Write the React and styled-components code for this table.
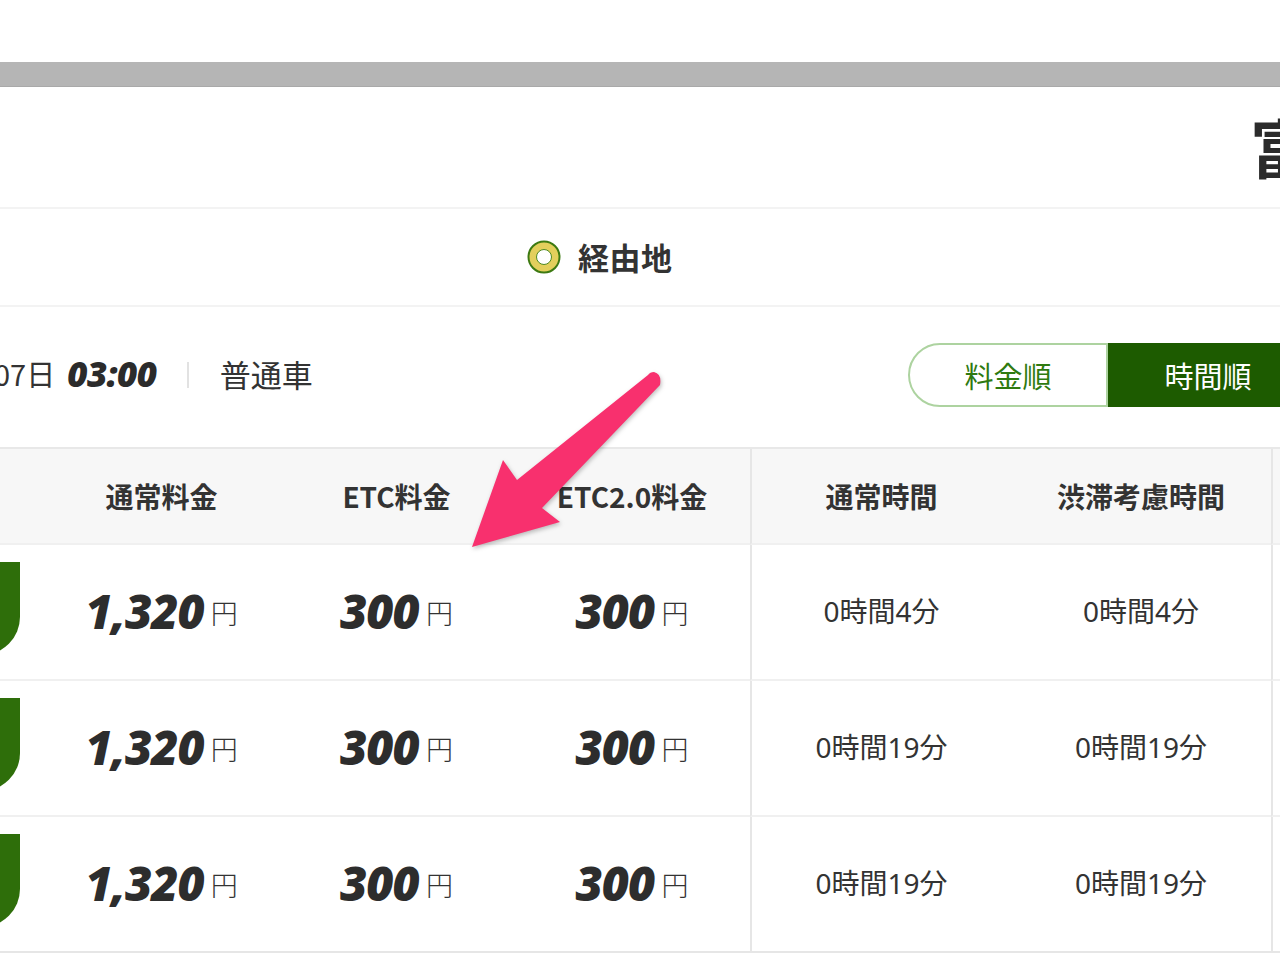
import React from 'react';
import styled, { createGlobalStyle } from 'styled-components';

const GlobalStyle = createGlobalStyle`
  html, body {
    margin: 0;
    padding: 0;
    background: #ffffff;
    overflow: hidden;
  }
  body {
    font-family: "Noto Sans", "Noto Sans CJK JP", sans-serif;
    color: #333333;
  }
`;

const Page = styled.div`
  position: relative;
  width: 1280px;
  height: 966px;
  overflow: hidden;
  background: #ffffff;
`;

const TopSpace = styled.div`
  height: 62px;
`;

const GreyBar = styled.div`
  height: 24px;
  background: #b5b5b5;
  border-bottom: 1px solid #a9a9a9;
`;

const TitleSection = styled.div`
  height: 120px;
  display: flex;
  align-items: center;
  justify-content: flex-end;
  overflow: hidden;
  border-bottom: 2px solid #f3f3f3;
`;

const TitleChar = styled.span`
  font-family: "Noto Sans CJK JP", sans-serif;
  font-weight: 700;
  font-size: 64px;
  line-height: 1;
  color: #2b2b2b;
  margin-right: -40px;
  margin-top: -4px;
  transform: translateX(-6px);
`;

const ViaSection = styled.div`
  height: 96px;
  display: flex;
  align-items: center;
  gap: 17px;
  padding-left: 527px;
  border-bottom: 2px solid #f3f3f3;
`;

const ViaLabel = styled.span`
  font-family: "Noto Sans CJK JP", sans-serif;
  font-weight: 700;
  font-size: 31px;
  color: #333333;
  letter-spacing: 0.5px;
  margin-top: -2px;
`;

const InfoRow = styled.div`
  height: 142px;
  box-sizing: border-box;
  padding-bottom: 4px;
  display: flex;
  align-items: center;
  justify-content: space-between;
  border-bottom: 2px solid #e8e8e8;
`;

const Conditions = styled.div`
  display: flex;
  align-items: center;
  margin-left: -6px;
  margin-top: -4px;
`;

const DateText = styled.span`
  font-family: "Noto Sans CJK JP", sans-serif;
  font-size: ${(p) => (p.$wide ? '31px' : '29px')};
  color: #333333;
`;

const TimeText = styled.span`
  font-family: "Open Sans", sans-serif;
  font-weight: 800;
  font-style: italic;
  font-size: 35px;
  color: #2b2b2b;
  margin-left: 12px;
  letter-spacing: -0.5px;
`;

const Divider = styled.span`
  width: 2px;
  height: 26px;
  background: #e2e2e2;
  margin: 4px 31px 0 30px;
`;

const SortToggle = styled.div`
  display: flex;
  margin-right: -28px;
`;

const SortButton = styled.div`
  width: 200px;
  height: 64px;
  box-sizing: border-box;
  display: flex;
  align-items: center;
  justify-content: center;
  font-family: "Noto Sans CJK JP", sans-serif;
  font-size: 29px;
  color: ${(p) => (p.$active ? '#ffffff' : '#2f7a10')};
  background: ${(p) => (p.$active ? '#1d5b00' : '#ffffff')};
  border: 2px solid ${(p) => (p.$active ? '#1d5b00' : '#add3a0')};
  border-radius: ${(p) => (p.$active ? '0' : '32px 0 0 32px')};
`;

const Table = styled.div`
  display: grid;
  grid-template-columns: 44px 235px 235px 236px 261px 260px 1fr;
`;

const HeadCell = styled.div`
  height: 96px;
  box-sizing: border-box;
  background: #f7f7f7;
  display: flex;
  align-items: center;
  justify-content: center;
  font-family: "Noto Sans CJK JP", sans-serif;
  font-weight: 700;
  font-size: 28px;
  color: #333333;
  border-bottom: 2px solid #f0f0f0;
  border-left: ${(p) => (p.$divide ? '2px solid #e6e6e6' : 'none')};
`;

const Cell = styled.div`
  height: 134px;
  display: flex;
  align-items: center;
  justify-content: ${(p) => (p.$start ? 'flex-start' : 'center')};
  border-bottom: 2px solid ${(p) => (p.$last ? '#e6e6e6' : '#f0f0f0')};
  border-left: ${(p) => (p.$divide ? '2px solid #e6e6e6' : 'none')};
`;

const RouteTab = styled.div`
  width: 60px;
  height: 93px;
  margin-left: -40px;
  margin-top: -8px;
  background: #2e6e0a;
  border-bottom-right-radius: 38px;
`;

const Price = styled.span`
  display: flex;
  align-items: center;
  gap: 7px;
  margin-top: -2px;
`;

const Amount = styled.span`
  font-family: "Open Sans", sans-serif;
  font-weight: 800;
  font-style: italic;
  font-size: 47px;
  letter-spacing: -1px;
  color: #2d2d2d;
`;

const Yen = styled.span`
  font-family: "Noto Sans CJK JP", sans-serif;
  font-weight: 300;
  font-size: 27px;
  color: #333333;
  margin-top: 2px;
`;

const Duration = styled.span`
  font-family: "Noto Sans", "Noto Sans CJK JP", sans-serif;
  font-size: 28px;
  color: #333333;
  margin-top: -4px;
`;

const Arrow = styled.svg`
  position: absolute;
  left: 0;
  top: 0;
  pointer-events: none;
  filter: drop-shadow(1px 2px 2px rgba(0, 0, 0, 0.25));
`;

const ViaIcon = () => (
  <svg width="34" height="34" viewBox="0 0 34 34">
    <circle cx="17" cy="17" r="15.5" fill="#e3cf5c" stroke="#3d7a12" strokeWidth="2" />
    <circle cx="17" cy="17" r="7.5" fill="#ffffff" stroke="#4f8a20" strokeWidth="1" />
  </svg>
);

const rows = [
  { normal: '1,320', etc: '300', etc2: '300', time: '0時間4分', jam: '0時間4分' },
  { normal: '1,320', etc: '300', etc2: '300', time: '0時間19分', jam: '0時間19分' },
  { normal: '1,320', etc: '300', etc2: '300', time: '0時間19分', jam: '0時間19分' },
];

const Fare = ({ value }) => (
  <Price>
    <Amount>{value}</Amount>
    <Yen>円</Yen>
  </Price>
);

const App = () => {
  return (
    <Page>
      <GlobalStyle />
      <TopSpace />
      <GreyBar />
      <TitleSection>
        <TitleChar>富</TitleChar>
      </TitleSection>
      <ViaSection>
        <ViaIcon />
        <ViaLabel>経由地</ViaLabel>
      </ViaSection>
      <InfoRow>
        <Conditions>
          <DateText>07日</DateText>
          <TimeText>03:00</TimeText>
          <Divider />
          <DateText $wide>普通車</DateText>
        </Conditions>
        <SortToggle>
          <SortButton>料金順</SortButton>
          <SortButton $active>時間順</SortButton>
        </SortToggle>
      </InfoRow>
      <Table>
        <HeadCell />
        <HeadCell>通常料金</HeadCell>
        <HeadCell>ETC料金</HeadCell>
        <HeadCell>ETC2.0料金</HeadCell>
        <HeadCell $divide>通常時間</HeadCell>
        <HeadCell>渋滞考慮時間</HeadCell>
        <HeadCell $divide />
        {rows.map((r, i) => {
          const last = i === rows.length - 1;
          return (
            <React.Fragment key={i}>
              <Cell $start $last={last}>
                <RouteTab />
              </Cell>
              <Cell $last={last}>
                <Fare value={r.normal} />
              </Cell>
              <Cell $last={last}>
                <Fare value={r.etc} />
              </Cell>
              <Cell $last={last}>
                <Fare value={r.etc2} />
              </Cell>
              <Cell $divide $last={last}>
                <Duration>{r.time}</Duration>
              </Cell>
              <Cell $last={last}>
                <Duration>{r.jam}</Duration>
              </Cell>
              <Cell $divide $last={last} />
            </React.Fragment>
          );
        })}
      </Table>
      <Arrow width="1280" height="966" viewBox="0 0 1280 966">
        <path
          d="M648 375 L517 480 L503 460 L472 547 L560 522 L542 508 L660 385 Q662 374 654 372 Q650 372 648 375 Z"
          fill="#f8306e"
        />
      </Arrow>
    </Page>
  );
};

export default App;
